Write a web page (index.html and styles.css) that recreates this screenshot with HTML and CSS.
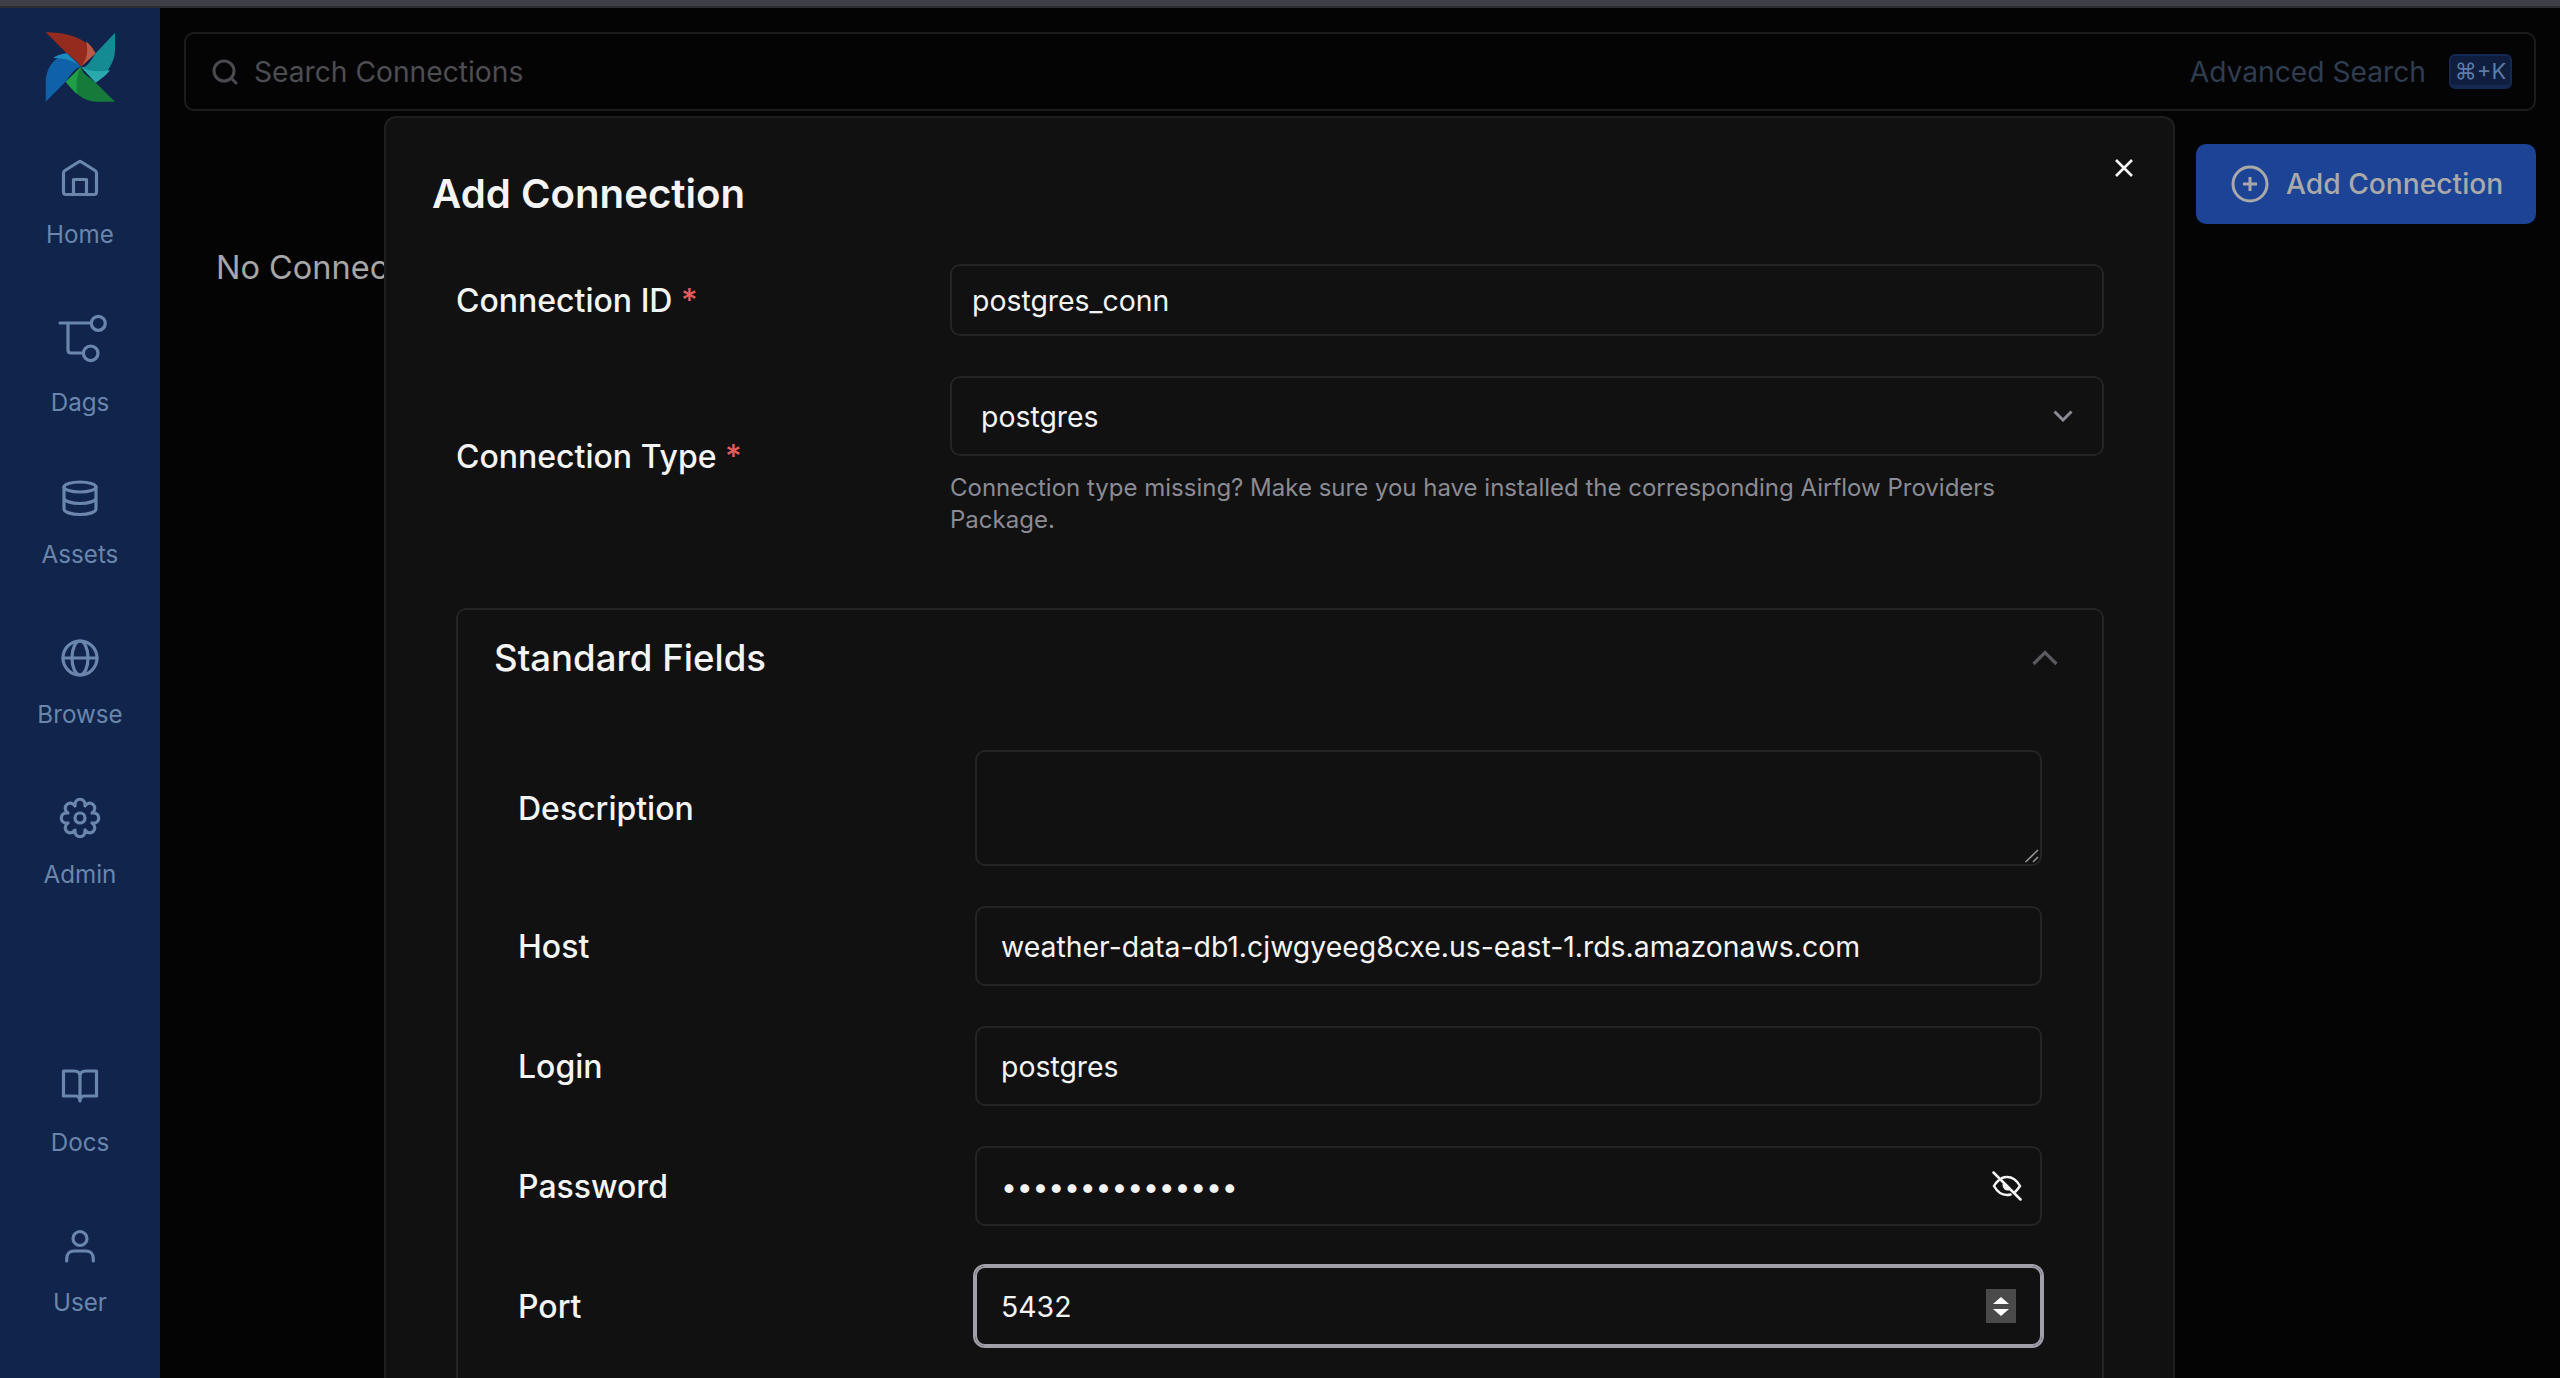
FILE: index.html
```html
<!DOCTYPE html>
<html lang="en">
<head>
  <meta charset="UTF-8">
  <title>Connections</title>
  <link rel="stylesheet" href="styles.css">
</head>
<body>
  <div class="topstrip"></div>
  <div class="app">
    <aside class="sidebar">
      <svg class="logo" viewBox="0 0 70 70">
        <path fill="#952a1e" d="M0.7 0.3C18 0.5 38 3 50.7 21.3L36 34.7C33 30 28 27 21.7 21.3Z"/>
        <path fill="#b85a45" d="M41 9.5C46 13 48 17 50.7 21.3L36 34.7C41 29 44 20 41 9.5Z"/>
        <path fill="#148a93" d="M70 0.7V18C70 30 62 42 50.7 50.7L36 34.7C42 37 46 28 50.7 21.3Z"/>
        <path fill="#2aa9ad" d="M36 34.7C44 40 54 40 65 38C62 43 56 47 50.7 50.7Z"/>
        <path fill="#157a3a" d="M70 69.7H51.7C38 69.7 29 60 20.7 49.7L36 34.7C37 42 44 45 50.7 50.7Z"/>
        <path fill="#1f9e45" d="M36 34.7C32 43 31 50 32 62C28 58 24 54 20.7 49.7Z"/>
        <path fill="#0f62a8" d="M0.7 69.7V51C0.7 41 5 27 21.7 21.3L36 34.7C30 36 26 42 20.7 49.7Z"/>
        <path fill="#1c8cc0" d="M8 26C12 23 17 22 21.7 21.3L36 34.7C28 28 18 26 8 26Z"/>
      </svg>
      <nav class="nav">
        <a class="nav-item">
          <svg class="nav-icon" viewBox="0 0 40 36"><path d="M3.5 13Q3.5 11.5 5 10.5L18.5 2Q20 1 21.5 2L35 10.5Q36.5 11.5 36.5 13V32Q36.5 34.5 34 34.5H6Q3.5 34.5 3.5 32ZM13.5 34.5V19.5H26.5V34.5"/></svg>
          <span>Home</span>
        </a>
        <a class="nav-item">
          <svg class="nav-icon nav-icon-tall" viewBox="0 0 56 52"><path d="M8 11H39M16 11V38Q16 41 19 41H30"/><circle cx="46.3" cy="11.3" r="7"/><circle cx="38.7" cy="41.3" r="7.3"/></svg>
          <span>Dags</span>
        </a>
        <a class="nav-item">
          <svg class="nav-icon" viewBox="0 0 40 36"><ellipse cx="20" cy="7" rx="16" ry="5"/><path d="M4 7V29C4 32 11 34.5 20 34.5S36 32 36 29V7M4 18C4 21 11 23.5 20 23.5S36 21 36 18"/></svg>
          <span>Assets</span>
        </a>
        <a class="nav-item">
          <svg class="nav-icon" viewBox="0 0 40 36"><circle cx="20" cy="18" r="17"/><ellipse cx="20" cy="18" rx="8" ry="17"/><path d="M3 18H37"/></svg>
          <span>Browse</span>
        </a>
        <a class="nav-item">
          <svg class="nav-icon" viewBox="0 0 40 36"><g transform="translate(20 18)"><path d="M12.01 -4.97C21 -6.5 21 6.5 12.01 4.97C19.45 10.25 10.25 19.45 4.97 12.01C6.5 21 -6.5 21 -4.97 12.01C-10.25 19.45 -19.45 10.25 -12.01 4.97C-21 6.5 -21 -6.5 -12.01 -4.97C-19.45 -10.25 -10.25 -19.45 -4.97 -12.01C-6.5 -21 6.5 -21 4.97 -12.01C10.25 -19.45 19.45 -10.25 12.01 -4.97Z"/><circle r="5"/></g></svg>
          <span>Admin</span>
        </a>
      </nav>
      <nav class="nav nav-bottom">
        <a class="nav-item">
          <svg class="nav-icon" viewBox="0 0 40 36"><path d="M3.5 3H14Q20 3 20 8Q20 3 26 3H36.5V28H24Q20.5 28 20 33Q19.5 28 16 28H3.5ZM20 8V33"/></svg>
          <span>Docs</span>
        </a>
        <a class="nav-item">
          <svg class="nav-icon" viewBox="0 0 40 36"><circle cx="20" cy="10.5" r="7"/><path d="M6.7 33V31C6.7 25.5 10 23 14 23H26C30 23 33.3 25.5 33.3 31V33"/></svg>
          <span>User</span>
        </a>
      </nav>
    </aside>

    <main class="main">
      <div class="search">
        <svg class="search-icon" viewBox="0 0 26 26"><circle cx="12" cy="12" r="10"/><path d="M19.5 19.5L24 24"/></svg>
        <span class="search-text">Search Connections</span>
        <span class="search-adv">Advanced Search</span>
        <span class="kbd">⌘+K</span>
      </div>
      <div class="content">
        <div class="empty">No Connections found</div>
        <button class="add-btn">
          <svg viewBox="0 0 38 38"><circle cx="19" cy="19" r="17"/><path d="M19 12V26M12 19H26"/></svg>
          Add Connection
        </button>
      </div>

      <div class="modal">
        <svg class="modal-close" viewBox="0 0 20 20"><path d="M2 2L18 18M18 2L2 18"/></svg>
        <h2 class="modal-title">Add Connection</h2>
        <form class="form">
          <div class="row">
            <label class="label">Connection ID <em>*</em></label>
            <div class="control field field-id"><input value="postgres_conn"></div>
          </div>
          <div class="row row-type">
            <label class="label">Connection Type <em>*</em></label>
            <div class="control">
              <div class="field field-select">
                <span>postgres</span>
                <svg class="chevron-down" viewBox="0 0 20 12"><path d="M1.5 1.5L10 10L18.500 1.500"/></svg>
              </div>
              <p class="help">Connection type missing? Make sure you have installed the corresponding Airflow Providers Package.</p>
            </div>
          </div>

          <section class="std">
            <header class="std-head">
              <h3>Standard Fields</h3>
              <svg class="chevron-up" viewBox="0 0 26 16"><path d="M1.500 14L13 2.500L24.500 14"/></svg>
            </header>
            <div class="std-body">
              <div class="std-row">
                <label class="label">Description</label>
                <div class="area-wrap">
                  <textarea class="area"></textarea>
                  <svg class="grip" viewBox="0 0 14 14"><path d="M0.500 13L13 1M8 13L13 8"/></svg>
                </div>
              </div>
              <div class="std-row">
                <label class="label">Host</label>
                <div class="field field-std"><input value="weather-data-db1.cjwgyeeg8cxe.us-east-1.rds.amazonaws.com"></div>
              </div>
              <div class="std-row">
                <label class="label">Login</label>
                <div class="field field-std"><input value="postgres"></div>
              </div>
              <div class="std-row">
                <label class="label">Password</label>
                <div class="field field-std">
                  <input class="pass" type="password" value="passwordpasswor">
                  <svg class="eye" viewBox="0 0 30 30"><path d="M10 7Q12.500 6 15 6Q23 6 28 15Q26 18 23.500 20.500M18.500 23.500Q17 24 15 24Q7 24 2 15Q3.500 12 6.500 9.500M12 13A4 4 0 0 0 17 18M1.500 1.500L28.500 28.500"/></svg>
                </div>
              </div>
              <div class="std-row">
                <label class="label">Port</label>
                <div class="field field-std field-focus">
                  <input value="5432">
                  <span class="spinner"><i class="tri-up"></i><i class="tri-down"></i></span>
                </div>
              </div>
            </div>
          </section>
        </form>
      </div>
    </main>
  </div>
</body>
</html>
```

FILE: styles.css
```css
* {
  margin: 0;
  padding: 0;
  box-sizing: border-box;
}

html, body {
  height: 100%;
  overflow: hidden;
  font-family: Inter, "Liberation Sans", sans-serif;
  background: #040404;
  color: #f4f4f5;
}

body {
  display: flex;
  flex-direction: column;
}

.topstrip {
  height: 8px;
  background: #3f3f47;
  border-bottom: 2px solid #2c2c31;
  flex: none;
}

.app {
  flex: 1;
  display: flex;
  min-height: 0;
}

/* sidebar */
.sidebar {
  width: 160px;
  flex: none;
  display: flex;
  flex-direction: column;
  align-items: center;
  padding: 24px 0;
  background: #10244c;
}

.logo {
  width: 70px;
  height: 70px;
  flex: none;
}

.nav {
  width: 100%;
  margin-top: 24px;
  display: flex;
  flex-direction: column;
}

.nav-bottom {
  margin-top: auto;
}

.nav-item {
  height: 160px;
  display: flex;
  flex-direction: column;
  align-items: center;
  justify-content: center;
  gap: 19px;
  padding-top: 1px;
  color: #6a86ab;
  font-size: 24.2px;
  line-height: 39px;
}

.nav-icon {
  width: 40px;
  height: 36px;
  overflow: visible;
  fill: none;
  stroke: #6a86ab;
  stroke-width: 3.2;
  stroke-linecap: round;
  stroke-linejoin: round;
}

.nav-icon-tall {
  width: 56px;
  height: 52px;
}

/* main area */
.main {
  flex: 1;
  min-width: 0;
  position: relative;
  padding: 24px 24px 0;
}

.search {
  height: 79px;
  display: flex;
  align-items: center;
  padding: 0 22px 0 26px;
  border: 2px solid #1c1c1c;
  border-radius: 10px;
  font-size: 28.2px;
}

.search-icon {
  width: 26px;
  height: 26px;
  fill: none;
  stroke: #4a4a50;
  stroke-width: 3;
  stroke-linecap: round;
}

.search-text {
  margin-left: 16px;
  color: #4d4d52;
}

.search-adv {
  margin-left: auto;
  color: #2f3d51;
}

.kbd {
  margin-left: 23px;
  width: 63px;
  height: 35px;
  display: flex;
  align-items: center;
  justify-content: center;
  background: #0f1d3f;
  border: 2px solid #132853;
  border-bottom-width: 4px;
  border-radius: 6px;
  color: #5c7ba6;
  font-size: 22px;
}

.content {
  margin-top: 33px;
  display: flex;
  justify-content: space-between;
}

.empty {
  padding: 100px 0 0 32px;
  font-size: 32.5px;
  line-height: 48px;
  color: #a6a6a6;
}

.add-btn {
  width: 340px;
  height: 80px;
  display: flex;
  align-items: center;
  gap: 17px;
  padding-left: 35px;
  background: #1c4396;
  border: 0;
  border-radius: 10px;
  color: #a9a9a9;
  font-family: inherit;
  font-size: 28.2px;
  font-weight: 500;
}

.add-btn svg {
  width: 38px;
  height: 38px;
  fill: none;
  stroke: #a9a9a9;
  stroke-width: 3;
}

/* dialog */
.modal {
  position: absolute;
  left: 224px;
  top: 108px;
  bottom: 0;
  width: 1791px;
  padding: 52px 0 0 46px;
  overflow: hidden;
  background: #111;
  border: 2px solid #1e1e1e;
  border-bottom: 0;
  border-radius: 12px 12px 0 0;
}

.modal-close {
  position: absolute;
  right: 39px;
  top: 40px;
  width: 20px;
  height: 20px;
  fill: none;
  stroke: #f4f4f5;
  stroke-width: 2.600;
}

.modal-title {
  font-size: 40.2px;
  line-height: 48px;
  font-weight: 600;
}

.form {
  width: 1648px;
  margin: 46px 0 0 24px;
}

.row {
  display: grid;
  grid-template-columns: 494px 1fr;
  align-items: center;
  margin-bottom: 40px;
}

.row-type {
  margin-bottom: 72px;
}

.label {
  font-size: 32px;
  font-weight: 500;
}

.label em {
  font-style: normal;
  color: #e45c5c;
}

.field {
  display: flex;
  align-items: center;
  height: 80px;
  border: 2px solid #242424;
  border-radius: 10px;
}

.field input {
  flex: 1;
  min-width: 0;
  height: 100%;
  background: none;
  border: 0;
  outline: 0;
  color: #f4f4f5;
  font-family: inherit;
  font-size: 28.4px;
}

.field .pass {
  letter-spacing: -0.2px;
}

.field-id {
  height: 72px;
  padding-left: 20px;
}

.field-select {
  justify-content: space-between;
  padding: 0 29px 0 29px;
  font-size: 28.4px;
}

.chevron-down {
  width: 20px;
  height: 12px;
  fill: none;
  stroke: #8a8a92;
  stroke-width: 3;
}

.help {
  margin-top: 16px;
  font-size: 24px;
  line-height: 32px;
  color: #8b8b94;
}

.std {
  border: 2px solid #242424;
  border-bottom: 0;
  border-radius: 10px 10px 0 0;
}

.std-head {
  height: 96px;
  display: flex;
  align-items: center;
  justify-content: space-between;
  padding: 0 44px 0 36px;
}

.std-head h3 {
  font-size: 36.6px;
  font-weight: 500;
}

.chevron-up {
  width: 26px;
  height: 16px;
  fill: none;
  stroke: #5a5a60;
  stroke-width: 3.200;
}

.std-body {
  padding: 44px 60px 100px;
}

.std-row {
  display: grid;
  grid-template-columns: 457px 1fr;
  align-items: center;
  margin-bottom: 40px;
}

.area-wrap {
  position: relative;
}

.area {
  display: block;
  width: 100%;
  height: 116px;
  background: none;
  border: 2px solid #242424;
  border-radius: 10px;
  outline: 0;
  resize: none;
}

.grip {
  position: absolute;
  right: 3px;
  bottom: 3px;
  width: 14px;
  height: 14px;
  fill: none;
  stroke: #9a9a9a;
  stroke-width: 1.500;
}

.field-std {
  padding: 0 18px 0 24px;
}

.field-focus {
  border-color: #a0a0ab;
  box-shadow: 0 0 0 2px #a0a0ab;
}

.eye {
  width: 30px;
  height: 30px;
  flex: none;
  fill: none;
  stroke: #f4f4f5;
  stroke-width: 2.500;
  stroke-linecap: round;
}

.spinner {
  width: 30px;
  height: 34px;
  margin-right: 6px;
  flex: none;
  display: flex;
  flex-direction: column;
  align-items: center;
  justify-content: center;
  gap: 5px;
  background: #4a4a4a;
}

.tri-up {
  border: 8px solid transparent;
  border-top: 0;
  border-bottom: 7px solid #fff;
}

.tri-down {
  border: 8px solid transparent;
  border-bottom: 0;
  border-top: 7px solid #fff;
}
```
